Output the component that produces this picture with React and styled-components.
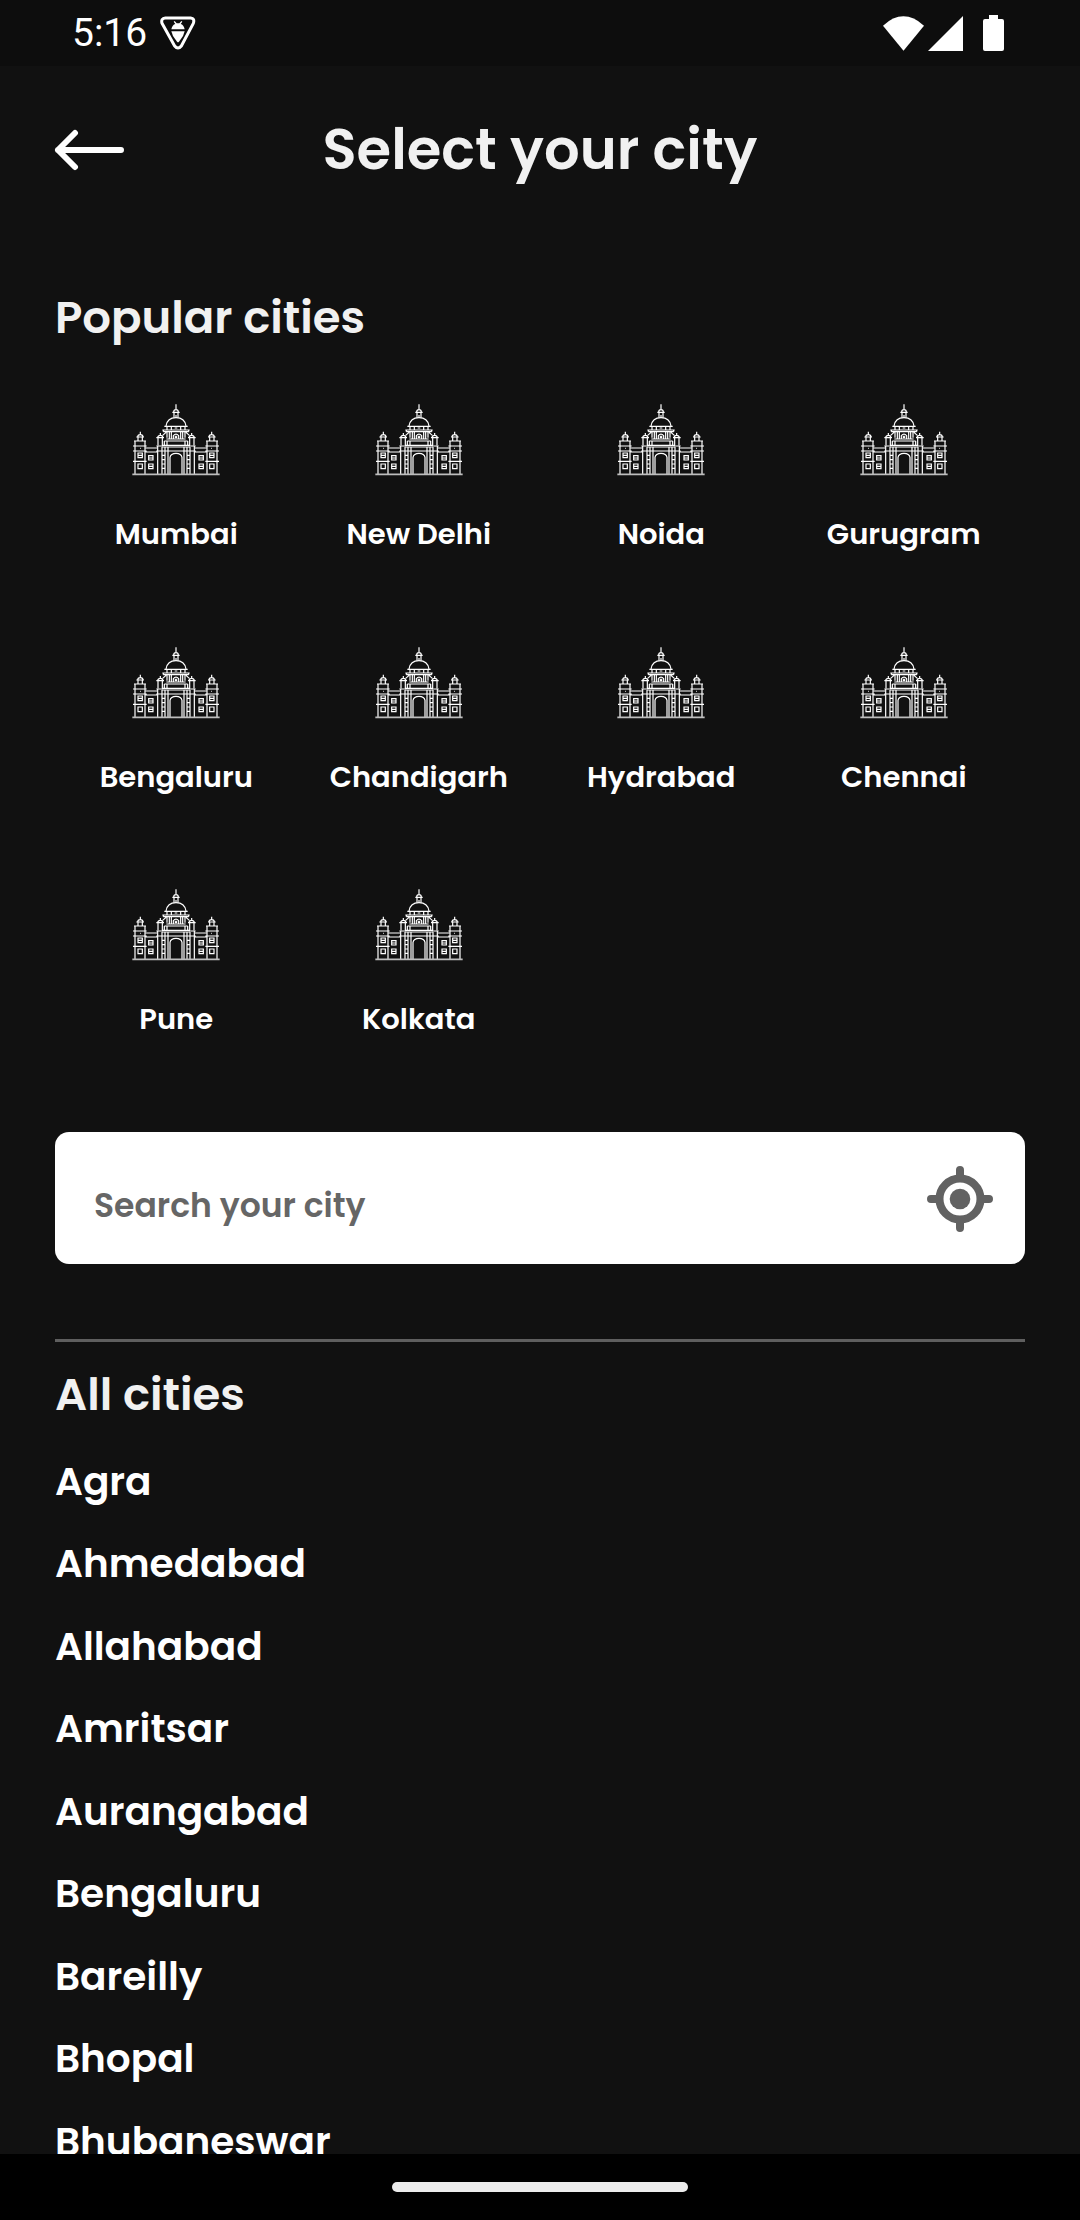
import React from "react";
import styled, { createGlobalStyle } from "styled-components";

const GlobalStyle = createGlobalStyle`
  *, *::before, *::after { box-sizing: border-box; }
  body { margin: 0; background: #111111; }
  button, input { font: inherit; color: inherit; }
`;

const Screen = styled.div`
  display: flex;
  flex-direction: column;
  height: 100vh;
  background: #111111;
  color: #ffffff;
  font-family: Poppins, Inter, sans-serif;
  font-weight: 600;
`;

const StatusBar = styled.div`
  flex: none;
  display: flex;
  align-items: center;
  justify-content: space-between;
  height: 66px;
  padding: 0 76px 0 72px;
  background: #0d0d0d;
`;

const StatusGroup = styled.div`
  display: flex;
  align-items: center;
  gap: ${(p) => p.$gap}px;
  svg { display: block; }
`;

const Clock = styled.time`
  font-family: Roboto, sans-serif;
  font-weight: 400;
  font-size: 39px;
  line-height: 46px;
`;

const Header = styled.header`
  flex: none;
  display: grid;
  grid-template-columns: 72px 1fr 72px;
  align-items: center;
  height: 168px;
  padding: 0 54px;
`;

const IconButton = styled.button`
  display: block;
  padding: 0;
  border: 0;
  background: none;
  cursor: pointer;
  svg { display: block; }
`;

const Title = styled.h1`
  margin: 0;
  color: #f1f1f1;
  font-size: 56px;
  font-weight: 600;
  line-height: 72px;
  text-align: center;
`;

const Content = styled.main`
  flex: 1;
  min-height: 0;
  overflow-y: auto;
  scrollbar-width: none;
  padding: 48px 55px 0;
`;

const SectionTitle = styled.h2`
  margin: 0;
  color: #f1f1f1;
  font-size: 45px;
  font-weight: 600;
  line-height: 72px;
`;

const CityGrid = styled.ul`
  display: grid;
  grid-template-columns: repeat(4, 1fr);
  margin: 0;
  padding: 0;
  list-style: none;
`;

const CityTile = styled.button`
  display: flex;
  flex-direction: column;
  align-items: center;
  gap: 36px;
  width: 100%;
  aspect-ratio: 1;
  padding: 50px 0 0;
  border: 0;
  background: none;
  font-size: 29px;
  line-height: 44px;
  white-space: nowrap;
  cursor: pointer;
  svg { display: block; flex: none; }
`;

const SearchBox = styled.div`
  display: flex;
  align-items: center;
  height: 132px;
  margin-top: 50px;
  padding: 2px 32px 0 39px;
  border-radius: 14px;
  background: #ffffff;
  color: #666666;
`;

const SearchInput = styled.input`
  flex: 1;
  min-width: 0;
  height: 100%;
  padding: 14px 0 0;
  border: 0;
  outline: 0;
  background: none;
  font-size: 33px;
  font-weight: 600;
  &::placeholder { color: #666666; opacity: 1; }
`;

const Divider = styled.hr`
  height: 3px;
  margin: 75px 0 17px;
  border: 0;
  background: #5f5f5f;
`;

const CityList = styled.ul`
  margin: 22px 0 0;
  padding: 0;
  list-style: none;
`;

const CityRow = styled.li`
  margin-bottom: 24px;
  font-size: 39px;
  line-height: 1.5;
`;

const CityLink = styled.a`
  display: block;
  color: #ffffff;
  text-decoration: none;
`;

const NavBar = styled.div`
  flex: none;
  display: flex;
  align-items: center;
  justify-content: center;
  height: 66px;
  background: #000000;
`;

const NavPill = styled.div`
  width: 296px;
  height: 10px;
  border-radius: 5px;
  background: #ececec;
`;

function ShieldIcon() {
  return (
    <svg width="36" height="34" viewBox="0 0 108 102" fill="none" aria-hidden="true">
      <path d="M16 6H92Q105 7 100 22L64 90Q54 102 44 90L6 22Q2 7 16 6Z" stroke="#fff" strokeWidth="9" strokeLinejoin="round" />
      <path d="M34 40Q37 26 46 24L41 17L44 15L50 22H58L64 15L67 17L62 24Q71 26 74 40Z" fill="#fff" />
      <path d="M34 46H74L69 60L57 77Q54 80 51 77L39 60Z" fill="#fff" />
    </svg>
  );
}

function WifiIcon() {
  return (
    <svg width="41" height="35" viewBox="0 0 123 105" aria-hidden="true">
      <path d="M0 29Q61 -27 123 29L61.500 104Z" fill="#fff" />
    </svg>
  );
}

function SignalIcon() {
  return (
    <svg width="35" height="35" viewBox="0 0 35 35" aria-hidden="true">
      <path d="M35 0V35H0Z" fill="#fff" />
    </svg>
  );
}

function BatteryIcon() {
  return (
    <svg width="21" height="36" viewBox="0 0 21 36" aria-hidden="true">
      <path d="M6 0H15V4H19Q21 4 21 6V34Q21 36 19 36H2Q0 36 0 34V6Q0 4 2 4H6Z" fill="#fff" />
    </svg>
  );
}

function ArrowIcon() {
  return (
    <svg width="72" height="42" viewBox="0 0 72 42" fill="none" stroke="#fff" strokeWidth="6" strokeLinecap="round" strokeLinejoin="round" aria-hidden="true">
      <path d="M4 21H67M21 4L4 21L21 38" />
    </svg>
  );
}

function LocateIcon() {
  return (
    <svg width="66" height="66" viewBox="0 0 66 66" fill="none" stroke="#626262" strokeWidth="8" strokeLinecap="round" aria-hidden="true">
      <circle cx="33" cy="33" r="20.500" />
      <circle cx="33" cy="33" r="10.300" fill="#626262" stroke="none" />
      <path d="M33 4V10M33 56V62M4 33H10M56 33H62" />
    </svg>
  );
}

const wing = [
  "M62 109V119M54 125Q54 118 62 118Q70 118 70 125M50 125H73M55 125V137M68 125V137",
  "M43 137H79M40 152H81M40 167H81M40 198H81M46 137V237M76 137V237M61 159H63",
  "M55 173H68V187H55ZM55 180H68M55 206H68V220H55Z",
  "M78 158H112M78 170H112M87 181H100V194H87ZM87 188H100M87 206H100V220H87ZM87 213H100",
  "M122 113V120M114 127Q115 120 122 120Q129 120 130 127M110 127H133M115 127V150M128 127V150M110 152H128",
  "M114 152V237M127 155V237M136 155V237M110 167H147M127 180H136M127 193H136M127 206H136M127 219H136",
  "M139 92Q143 67 169 67M134 93H169M142 93V103M155 93V103M128 104H169M131 109H169M131 104V109",
  "M142 109V127M149 109V131M139 111L129 120M155 111V131M140 131H169M134 137H169M127 150H169M134 137V150M142 137V150M127 155H169",
  "M145 155V237M151 186V237M151 186Q153 174 169 174M145 167H169",
].join("");

function MonumentIcon() {
  return (
    <svg width="88" height="72" viewBox="37 26 264 216" fill="none" stroke="#fff" strokeWidth="3.600" aria-hidden="true">
      <path d={wing} />
      <path d={wing} transform="translate(338 0) scale(-1 1)" />
      <path d="M169 27V43M162 50Q162 43 169 43Q176 43 176 50M158 51H180M163 51V67M175 51V67M169 59V67M165 98H173" />
      <path d="M161 131V121Q169 112 177 121V131M167 121V127H171V121" />
      <path d="M38 237H300" stroke="#bdbdbd" strokeWidth="5" />
    </svg>
  );
}

const popularCities = [
  "Mumbai", "New Delhi", "Noida", "Gurugram", "Bengaluru",
  "Chandigarh", "Hydrabad", "Chennai", "Pune", "Kolkata",
];

const allCities = [
  "Agra", "Ahmedabad", "Allahabad", "Amritsar", "Aurangabad",
  "Bengaluru", "Bareilly", "Bhopal", "Bhubaneswar",
];

export default function App() {
  return (
    <Screen>
      <GlobalStyle />
      <StatusBar>
        <StatusGroup $gap={13}>
          <Clock>5:16</Clock>
          <ShieldIcon />
        </StatusGroup>
        <StatusGroup $gap={4}>
          <WifiIcon />
          <StatusGroup $gap={20}>
            <SignalIcon />
            <BatteryIcon />
          </StatusGroup>
        </StatusGroup>
      </StatusBar>
      <Header>
        <IconButton type="button" aria-label="Back">
          <ArrowIcon />
        </IconButton>
        <Title>Select your city</Title>
      </Header>
      <Content>
        <SectionTitle>Popular cities</SectionTitle>
        <CityGrid>
          {popularCities.map((city) => (
            <li key={city}>
              <CityTile type="button">
                <MonumentIcon />
                {city}
              </CityTile>
            </li>
          ))}
        </CityGrid>
        <SearchBox>
          <SearchInput type="text" placeholder="Search your city" aria-label="Search your city" />
          <IconButton type="button" aria-label="Use my location">
            <LocateIcon />
          </IconButton>
        </SearchBox>
        <Divider />
        <SectionTitle>All cities</SectionTitle>
        <CityList>
          {allCities.map((city) => (
            <CityRow key={city}>
              <CityLink href="#">{city}</CityLink>
            </CityRow>
          ))}
        </CityList>
      </Content>
      <NavBar>
        <NavPill />
      </NavBar>
    </Screen>
  );
}
